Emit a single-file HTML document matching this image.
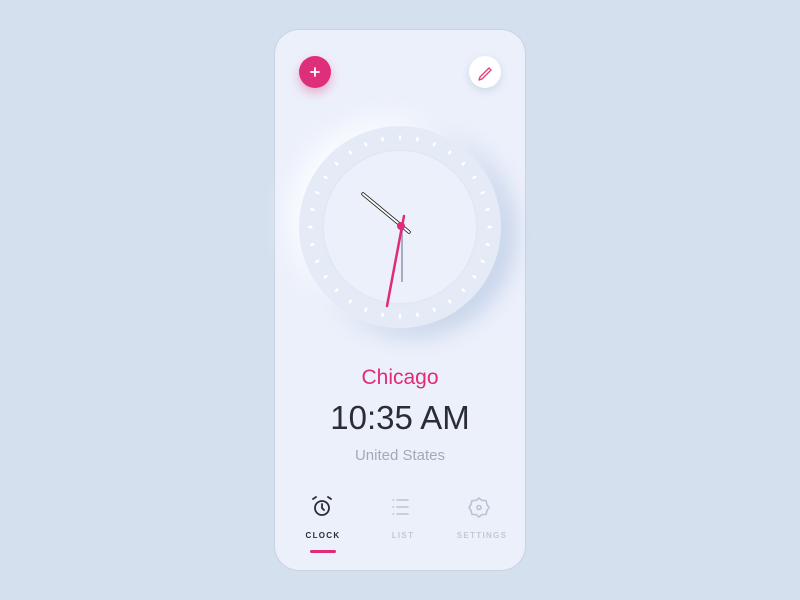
<!DOCTYPE html>
<html><head><style>
body{margin:0;width:800px;height:600px;background:#d5e0ef;position:relative;overflow:hidden;font-family:"Liberation Sans",sans-serif}
.card{position:absolute;left:275px;top:30px;width:250px;height:540px;border-radius:24px;background:#ecf0fb;box-shadow:0 0 0 1px #c9d3e3}
.t{position:absolute;width:800px;left:0;text-align:center}
.lab{position:absolute;font-size:8px;font-weight:bold;letter-spacing:1.3px;width:80px;text-align:center;top:531px}
</style></head><body>
<div class="card"></div>
<div style="position:absolute;left:299px;top:56px;width:32px;height:32px;border-radius:50%;background:#df2f7b;box-shadow:0 5px 10px rgba(223,47,123,.35)"></div>
<div style="position:absolute;left:469px;top:56px;width:32px;height:32px;border-radius:50%;background:#fff;box-shadow:0 3px 8px rgba(150,170,200,.35)"></div>
<svg style="position:absolute;left:0;top:0" width="800" height="600">
<defs>
<filter id="b" x="-50%" y="-50%" width="200%" height="200%"><feGaussianBlur stdDeviation="12"/></filter>
</defs>
<path d="M315 68v8M311 72h8" stroke="#fff" stroke-width="1.8" stroke-linecap="round"/>
<path d="M480 77 l9-9 2 2-9 9-3 1z" fill="none" stroke="#e0407f" stroke-width="1.4" stroke-linejoin="round"/>
<circle cx="413" cy="234" r="102" fill="#c4d2e8" filter="url(#b)"/>
<circle cx="388" cy="218" r="100" fill="#fafcff" filter="url(#b)"/>
<circle cx="400" cy="227" r="101" fill="#e4ebf7"/>
<circle cx="400" cy="227" r="77" fill="#ebf0fb" stroke="#e1e8f5" stroke-width="2"/>
<g id="ticks" stroke="#fff" stroke-width="2.4" stroke-linecap="round"></g>
<line x1="363" y1="194" x2="409" y2="232" stroke="#222" stroke-width="3.5" stroke-linecap="round"/>
<line x1="363" y1="194" x2="409" y2="232" stroke="#fff" stroke-width="1.8" stroke-linecap="round"/>
<line x1="402" y1="226" x2="402" y2="282" stroke="#a5adc2" stroke-width="2"/>
<line x1="387" y1="306" x2="404" y2="216" stroke="#e02c78" stroke-width="2.5" stroke-linecap="round"/>
<circle cx="401" cy="226" r="4" fill="#e02c78"/>
<g fill="none" stroke="#2a2d36" stroke-width="1.8" stroke-linecap="round"><circle cx="322" cy="508" r="7"/><path d="M322 504v4l2 2M313 499l3-2M331 499l-3-2"/></g>
<g stroke="#bcc3d0" stroke-width="1.6" stroke-linecap="round"><path d="M397 500h11M397 507h11M397 514h11"/><path d="M393 500h.5M393 507h.5M393 514h.5"/></g>
<g fill="none" stroke="#bcc3d0" stroke-width="1.6"><path d="M479 498l3 2.5 4 0 1 4 2 3-2 3-1 4-4 0-3 2.5-3-2.5-4 0-1-4-2-3 2-3 1-4 4 0z"/><circle cx="479" cy="507.5" r="2"/></g>
<rect x="310" y="550" width="26" height="3" rx="1.5" fill="#e02c78"/>
</svg>
<script>
var g=document.getElementById('ticks');for(var i=0;i<32;i++){var a=i*11.25*Math.PI/180,c=Math.sin(a),s=Math.cos(a);var l=document.createElementNS('http://www.w3.org/2000/svg','line');l.setAttribute('x1',400+c*88.5);l.setAttribute('y1',227-s*88.5);l.setAttribute('x2',400+c*90.5);l.setAttribute('y2',227-s*90.5);g.appendChild(l);}
</script>
<div class="t" style="top:366px;font-size:21px;color:#e02c78">Chicago</div>
<div class="t" style="top:399px;font-size:33px;color:#2a2d36">10:35 AM</div>
<div class="t" style="top:447px;font-size:15px;color:#a3a9b7">United States</div>
<div class="lab" style="left:283px;color:#2a2d36">CLOCK</div>
<div class="lab" style="left:363px;color:#c3c8d3">LIST</div>
<div class="lab" style="left:442px;color:#c3c8d3">SETTINGS</div>
</body></html>
